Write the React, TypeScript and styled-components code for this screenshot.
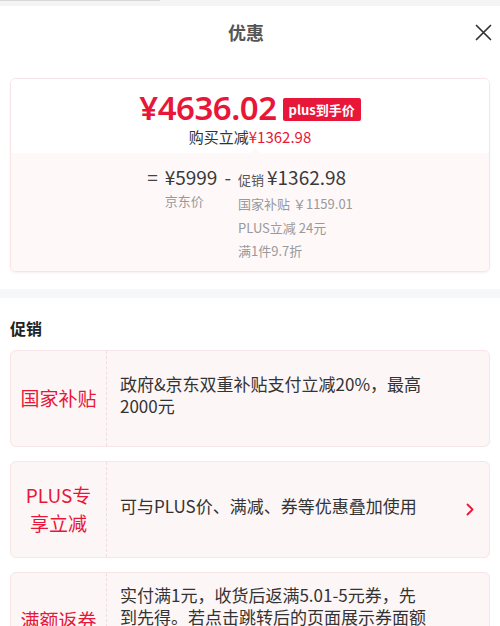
import styled, { createGlobalStyle } from 'styled-components';

const GlobalStyle = createGlobalStyle`
  body {
    margin: 0;
    background: #fff;
    font-family: 'Noto Sans CJK SC', 'Noto Sans', sans-serif;
    color: #333;
  }
`;

const RED = '#e8173a';

const Page = styled.div`
  width: 500px;
  display: flex;
  flex-direction: column;
`;

const TopStrip = styled.div`
  height: 6px;
  background: #f4f4f4;

  > span {
    display: block;
    width: 160px;
    height: 1px;
    background: #d8d8d8;
  }
`;

const Header = styled.div`
  display: grid;
  grid-template-columns: 40px 1fr 40px;
  align-items: center;
  height: 52px;
  padding: 0 8px 0 0;

  > h1 {
    grid-column: 2;
    margin: 0;
    text-align: center;
    font-size: 18px;
    font-weight: 700;
    color: #555;
  }
`;

const CloseButton = styled.button`
  border: 0;
  background: transparent;
  padding: 0;
  display: flex;
  justify-content: flex-end;
  cursor: pointer;
`;

const PriceCard = styled.div`
  margin: 20px 10px 0;
  border: 1px solid #f6e4e7;
  border-radius: 6px;
  overflow: hidden;
  box-shadow: 0 1px 2px rgba(230, 200, 205, 0.3);
`;

const PriceTop = styled.div`
  position: relative;
  display: flex;
  flex-direction: column;
  align-items: center;
  padding: 10px 0 6px;
  background: #fff;
`;

const PriceLine = styled.div`
  display: flex;
  align-items: center;
  gap: 6px;
  height: 38px;
`;

const BigPrice = styled.span`
  font-family: 'Noto Sans', sans-serif;
  color: ${RED};
  font-size: 33px;
  font-weight: 600;
  line-height: 34px;
  letter-spacing: -0.5px;
`;

const Badge = styled.span`
  background: ${RED};
  color: #fff;
  font-size: 13px;
  font-weight: 700;
  line-height: 23px;
  padding: 0 6px;
  border-radius: 2px;
  margin-top: 2px;
`;

const SubLine = styled.div`
  font-size: 15px;
  line-height: 20px;
  color: #333;

  > em {
    font-style: normal;
    color: ${RED};
  }
`;

const Notch = styled.i`
  position: absolute;
  left: 50%;
  bottom: 0;
  width: 0;
  height: 0;
  border-left: 5px solid transparent;
  border-right: 5px solid transparent;
  border-bottom: 5px solid #fef8f9;
`;

const PriceBottom = styled.div`
  display: flex;
  justify-content: center;
  align-items: flex-start;
  gap: 7px;
  padding: 12px 0 8px;
  background: #fef8f9;
  color: #444;
`;

const Sym = styled.span`
  font-size: 19px;
  line-height: 24px;
`;

const PriceCol = styled.div`
  display: flex;
  flex-direction: column;
`;

const Amount = styled.div`
  font-size: 19px;
  line-height: 24px;
  color: #3a3a3a;

  > small {
    font-size: 13px;
    color: #555;
    margin-right: 3px;
  }
`;

const Note = styled.div`
  font-size: 13px;
  line-height: 23.5px;
  color: #999;
`;

const Divider = styled.div`
  height: 9px;
  margin-top: 17px;
  background: #f6f7f9;
`;

const SectionTitle = styled.h2`
  margin: 0;
  padding: 18px 10px 10px;
  font-size: 16px;
  font-weight: 700;
  color: #222;
`;

const CardList = styled.div`
  display: flex;
  flex-direction: column;
  gap: 14px;
  padding: 0 10px;
`;

const PromoCard = styled.div`
  display: grid;
  grid-template-columns: 96px 1fr 58px;
  min-height: 95px;
  background: #fdf6f7;
  border: 1px solid #f7e5e8;
  border-radius: 6px;
`;

const PromoLabel = styled.div`
  display: flex;
  align-items: center;
  justify-content: center;
  padding: 0 9px;
  border-right: 1px dashed #f0dde1;
  text-align: center;
  font-size: 19px;
  line-height: 28px;
  color: ${RED};
`;

const PromoText = styled.div`
  display: flex;
  align-items: center;
  padding: 8px 0 14px 13px;
  font-size: 17px;
  line-height: 22px;
  color: #333;
`;

const Arrow = styled.div`
  display: flex;
  align-items: center;
  justify-content: flex-end;
  padding-right: 15px;
  color: ${RED};
`;

const promos = [
  { label: '国家补贴', text: '政府&京东双重补贴支付立减20%，最高2000元', arrow: false },
  { label: 'PLUS专享立减', text: '可与PLUS价、满减、券等优惠叠加使用', arrow: true },
  {
    label: '满额返券',
    text: '实付满1元，收货后返满5.01-5元券，先到先得。若点击跳转后的页面展示券面额到账不满，以实际为准',
    arrow: false,
  },
];

function App() {
  return (
    <Page>
      <GlobalStyle />
      <TopStrip>
        <span />
      </TopStrip>
      <Header>
        <h1>优惠</h1>
        <CloseButton aria-label="关闭">
          <svg width="17" height="17" viewBox="0 0 17 17">
            <path d="M1.5 1.5L15.5 15.5M15.5 1.5L1.5 15.5" stroke="#333" strokeWidth="1.7" strokeLinecap="round" />
          </svg>
        </CloseButton>
      </Header>

      <PriceCard>
        <PriceTop>
          <PriceLine>
            <BigPrice>¥4636.02</BigPrice>
            <Badge>plus到手价</Badge>
          </PriceLine>
          <SubLine>
            购买立减<em>¥1362.98</em>
          </SubLine>
          <Notch />
        </PriceTop>
        <PriceBottom>
          <Sym>=</Sym>
          <PriceCol>
            <Amount>¥5999</Amount>
            <Note>京东价</Note>
          </PriceCol>
          <Sym>-</Sym>
          <PriceCol>
            <Amount>
              <small>促销</small>¥1362.98
            </Amount>
            <Note>国家补贴 ￥1159.01</Note>
            <Note>PLUS立减 24元</Note>
            <Note>满1件9.7折</Note>
          </PriceCol>
        </PriceBottom>
      </PriceCard>

      <Divider />
      <SectionTitle>促销</SectionTitle>

      <CardList>
        {promos.map((p) => (
          <PromoCard key={p.label}>
            <PromoLabel>{p.label}</PromoLabel>
            <PromoText>{p.text}</PromoText>
            <Arrow>
              {p.arrow && (
                <svg width="8" height="13" viewBox="0 0 8 13">
                  <path d="M1.5 1.5L6.5 6.5L1.5 11.5" stroke={RED} strokeWidth="1.8" fill="none" strokeLinecap="round" strokeLinejoin="round" />
                </svg>
              )}
            </Arrow>
          </PromoCard>
        ))}
      </CardList>
    </Page>
  );
}

export default App;
